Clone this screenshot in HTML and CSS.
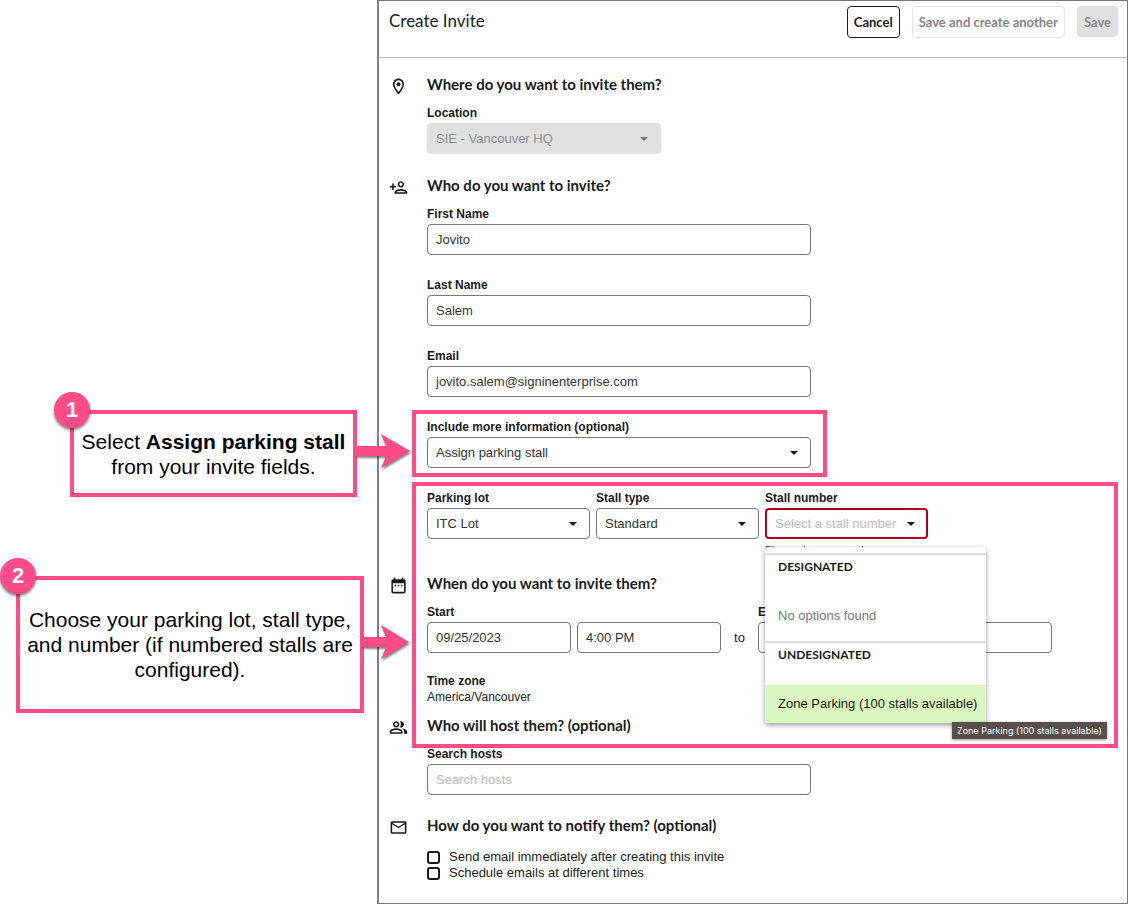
FILE: index.html
```html
<!DOCTYPE html>
<html lang="en">
<head>
    <meta charset="UTF-8">
    <meta name="viewport" content="width=device-width, initial-scale=1.0">
    <title>Create Invite</title>
    <link rel="stylesheet" href="styles.css">
</head>
<body>
    <div class="page">
        <aside class="notes">
            <div class="note note-first">
                <span class="badge">1</span>
                <p>Select <strong>Assign parking stall</strong><br>from your invite fields.</p>
                <svg class="arrow" width="56" height="36" viewBox="0 0 56 36"><path d="M0 13h31L26 1l29 17-29 17 5-12H0z"/></svg>
            </div>
            <div class="note note-second">
                <span class="badge">2</span>
                <p>Choose your parking lot, stall type,<br>and number (if numbered stalls are<br>configured).</p>
                <svg class="arrow" width="48" height="36" viewBox="0 0 48 36"><path d="M0 13h24L19 1l28 17-28 17 5-12H0z"/></svg>
            </div>
        </aside>

        <form class="panel">
            <header class="panel-header">
                <h1>Create Invite</h1>
                <div class="actions">
                    <button type="button" class="btn">Cancel</button>
                    <button type="button" class="btn btn-light" disabled>Save and create another</button>
                    <button type="submit" class="btn btn-save" disabled>Save</button>
                </div>
            </header>

            <main class="panel-body">
                <section class="section">
                    <svg class="icon" viewBox="0 0 24 24"><path d="M12 2C8.13 2 5 5.13 5 9c0 5.25 7 13 7 13s7-7.75 7-13c0-3.87-3.13-7-7-7zM7 9c0-2.76 2.24-5 5-5s5 2.24 5 5c0 2.88-2.88 7.19-5 9.88C9.92 16.21 7 11.85 7 9z"/><circle cx="12" cy="9" r="2.5"/></svg>
                    <div class="section-content">
                        <h2>Where do you want to invite them?</h2>
                        <div class="field field-location">
                            <label for="location">Location</label>
                            <div class="select">
                                <select id="location" disabled>
                                    <option>SIE - Vancouver HQ</option>
                                </select>
                            </div>
                        </div>
                    </div>
                </section>

                <section class="section">
                    <svg class="icon" viewBox="0 0 24 24"><path d="M15 12c2.21 0 4-1.79 4-4s-1.79-4-4-4-4 1.79-4 4 1.79 4 4 4zm0-6c1.1 0 2 .9 2 2s-.9 2-2 2-2-.9-2-2 .9-2 2-2zm0 8c-2.67 0-8 1.34-8 4v2h16v-2c0-2.66-5.33-4-8-4zm-6 4c.22-.72 3.31-2 6-2 2.7 0 5.8 1.29 6 2H9zm-3-3v-3h3v-2H6V7H4v3H1v2h3v3z"/></svg>
                    <div class="section-content">
                        <h2>Who do you want to invite?</h2>
                        <div class="fields">
                            <div class="field">
                                <label for="first-name">First Name</label>
                                <input type="text" id="first-name" value="Jovito">
                            </div>
                            <div class="field">
                                <label for="last-name">Last Name</label>
                                <input type="text" id="last-name" value="Salem">
                            </div>
                            <div class="field">
                                <label for="email">Email</label>
                                <input type="email" id="email" value="jovito.salem@signinenterprise.com">
                            </div>
                            <div class="field highlight-info">
                                <label for="more-info">Include more information (optional)</label>
                                <div class="select">
                                    <select id="more-info">
                                        <option>Assign parking stall</option>
                                    </select>
                                </div>
                            </div>
                            <div class="parking-row highlight-parking">
                                <div class="field">
                                    <label for="parking-lot">Parking lot</label>
                                    <div class="select">
                                        <select id="parking-lot">
                                            <option>ITC Lot</option>
                                        </select>
                                    </div>
                                </div>
                                <div class="field">
                                    <label for="stall-type">Stall type</label>
                                    <div class="select">
                                        <select id="stall-type">
                                            <option>Standard</option>
                                        </select>
                                    </div>
                                </div>
                                <div class="field stall-number">
                                    <label for="stall-number">Stall number</label>
                                    <div class="select">
                                        <select id="stall-number" class="invalid">
                                            <option>Select a stall number</option>
                                        </select>
                                    </div>
                                    <p class="error">Please choose an option</p>
                                    <div class="menu">
                                        <div class="menu-group">
                                            <h3>Designated</h3>
                                            <p class="menu-item empty">No options found</p>
                                        </div>
                                        <div class="menu-group">
                                            <h3>Undesignated</h3>
                                            <p class="menu-item active">Zone Parking (100 stalls available)</p>
                                        </div>
                                        <span class="tooltip">Zone Parking (100 stalls available)</span>
                                    </div>
                                </div>
                            </div>
                        </div>
                    </div>
                </section>

                <section class="section section-when">
                    <svg class="icon" viewBox="0 0 24 24"><path d="M7 11h2v2H7v-2zm14-5v14c0 1.1-.9 2-2 2H5c-1.11 0-2-.9-2-2l.01-14c0-1.1.88-2 1.99-2h1V2h2v2h8V2h2v2h1c1.1 0 2 .9 2 2zm-2 14V9H5v11h14zm-4-9h2v2h-2v-2zm-4 0h2v2h-2v-2z"/></svg>
                    <div class="section-content">
                        <h2>When do you want to invite them?</h2>
                        <div class="dates">
                            <div class="field">
                                <label for="start-date">Start</label>
                                <div class="date-pair">
                                    <input type="text" id="start-date" value="09/25/2023">
                                    <input type="text" aria-label="Start time" value="4:00 PM">
                                </div>
                            </div>
                            <span class="to">to</span>
                            <div class="field">
                                <label for="end-date">End</label>
                                <div class="date-pair">
                                    <input type="text" id="end-date">
                                    <input type="text" aria-label="End time">
                                </div>
                            </div>
                        </div>
                        <div class="timezone">
                            <h4>Time zone</h4>
                            <p>America/Vancouver</p>
                        </div>
                    </div>
                </section>

                <section class="section section-host">
                    <svg class="icon" viewBox="0 0 24 24"><path d="M16.67 13.13C18.04 14.06 19 15.32 19 17v3h4v-3c0-2.18-3.57-3.47-6.33-3.87zM15 12c2.21 0 4-1.79 4-4s-1.79-4-4-4c-.47 0-.91.1-1.33.24C14.5 5.27 15 6.58 15 8s-.5 2.73-1.33 3.76c.42.14.86.24 1.33.24zM9 12c2.21 0 4-1.79 4-4s-1.79-4-4-4-4 1.79-4 4 1.79 4 4 4zm0-6c1.1 0 2 .9 2 2s-.9 2-2 2-2-.9-2-2 .9-2 2-2zm0 7c-2.67 0-8 1.34-8 4v3h16v-3c0-2.66-5.33-4-8-4zm6 5H3v-.99C3.2 16.29 6.3 15 9 15s5.8 1.29 6 2v1z"/></svg>
                    <div class="section-content">
                        <h2>Who will host them? (optional)</h2>
                        <div class="field">
                            <label for="hosts">Search hosts</label>
                            <input type="text" id="hosts" placeholder="Search hosts">
                        </div>
                    </div>
                </section>

                <section class="section">
                    <svg class="icon" viewBox="0 0 24 24"><path d="M22 6c0-1.1-.9-2-2-2H4c-1.1 0-2 .9-2 2v12c0 1.1.9 2 2 2h16c1.1 0 2-.9 2-2V6zm-2 0l-8 5-8-5h16zm0 12H4V8l8 5 8-5v10z"/></svg>
                    <div class="section-content">
                        <h2>How do you want to notify them? (optional)</h2>
                        <div class="checks">
                            <label class="check"><input type="checkbox">Send email immediately after creating this invite</label>
                            <label class="check"><input type="checkbox">Schedule emails at different times</label>
                        </div>
                    </div>
                </section>
            </main>
        </form>
    </div>
</body>
</html>
```

FILE: styles.css
```css
*, *::before, *::after {
    box-sizing: border-box;
}
body {
    margin: 0;
    font-family: "Liberation Sans", Arial, sans-serif;
    font-size: 13px;
    color: #1a1a1a;
    background-color: #ffffff;
}
h1, h2, h3, h4, p {
    margin: 0;
}
.page {
    display: grid;
    grid-template-columns: 377px 1fr;
    min-height: 100vh;
}

/* callouts */
.notes {
    padding-top: 410px;
}
.note {
    position: relative;
    z-index: 3;
    display: flex;
    align-items: center;
    justify-content: center;
    border: 4px solid #ff4b87;
    font-size: 21px;
    line-height: 25px;
    color: #000000;
    text-align: center;
    white-space: nowrap;
}
.note-first {
    height: 87px;
    margin: 0 20px 79px 70px;
}
.note-second {
    height: 137px;
    margin: 0 13px 0 16px;
}
.badge {
    position: absolute;
    top: -22px;
    left: -20px;
    width: 36px;
    height: 36px;
    border-radius: 50%;
    background-color: #ff4b87;
    box-shadow: 0 2px 3px rgba(0, 0, 0, 0.5);
    color: #ffffff;
    font-weight: bold;
    font-size: 22px;
    line-height: 36px;
}
.arrow {
    position: absolute;
    left: 100%;
    top: 50%;
    margin-top: -21px;
    margin-left: 2px;
    fill: #ff4b87;
    overflow: visible;
    filter: drop-shadow(1px 2px 1px rgba(0, 0, 0, 0.5));
}

/* form panel */
.panel {
    border: 1px solid #777777;
    border-left: 2px solid #808080;
}
.panel-header {
    display: flex;
    justify-content: space-between;
    align-items: flex-start;
    height: 57px;
    padding: 5px 9px 0 10px;
    border-bottom: 1px solid #bbbbbb;
}
h1, h2, .btn {
    font-family: Lato, "Open Sans", sans-serif;
}
h1 {
    font-size: 17px;
    font-weight: normal;
    line-height: 30px;
}
.actions {
    display: flex;
    align-items: flex-start;
    gap: 12px;
}
.btn {
    height: 32px;
    padding: 0 6px;
    border: 1px solid #1a1a1a;
    border-radius: 4px;
    background-color: #ffffff;
    color: #1a1a1a;
    font-size: 13px;
    font-weight: bold;
}
.btn-light {
    border-color: #e4e4e4;
    color: #858585;
}
.btn-save {
    height: 31px;
    border-color: #e0e0e0;
    background-color: #e0e0e0;
    color: #8a8a8a;
}
.panel-body {
    padding: 16px 9px 0 10px;
}
.section {
    display: grid;
    grid-template-columns: 38px 1fr;
    margin-bottom: 21px;
}
.icon {
    width: 19px;
    height: 19px;
    margin-top: 3px;
    fill: #1a1a1a;
}
h2 {
    margin-bottom: 11px;
    font-size: 15px;
    font-weight: bold;
    line-height: 20px;
}
.fields {
    display: flex;
    flex-direction: column;
    gap: 22px;
}
.field {
    position: relative;
    display: flex;
    flex-direction: column;
    gap: 2px;
    width: 100%;
    max-width: 384px;
}
.field-location {
    max-width: 234px;
}
.field label, h4 {
    font-size: 12px;
    font-weight: bold;
    line-height: 16px;
}
input[type="text"], input[type="email"], select {
    width: 100%;
    height: 31px;
    padding: 0 8px;
    border: 1px solid #777777;
    border-radius: 4px;
    background-color: #ffffff;
    color: #333333;
    font-family: inherit;
    font-size: 13px;
}
input::placeholder {
    color: #bbbbbb;
}
select {
    appearance: none;
    cursor: pointer;
}
select:disabled {
    border-color: #e0e0e0;
    background-color: #e0e0e0;
    color: #8f8f8f;
    opacity: 1;
}
select.invalid {
    border: 2px solid #b00020;
    color: #bbbbbb;
}
.select {
    position: relative;
}
.select::after {
    content: "";
    position: absolute;
    top: 14px;
    right: 13px;
    border: 4px solid transparent;
    border-top-color: #1a1a1a;
    border-bottom: 0;
    pointer-events: none;
}
.field-location .select::after {
    border-top-color: #777777;
}
.parking-row {
    position: relative;
    display: flex;
    gap: 6px;
}
.parking-row .field {
    max-width: 163px;
}

/* pink frames round the fields the callouts point to */
.highlight-info::after, .highlight-parking::after {
    content: "";
    position: absolute;
    left: -15px;
    border: 4px solid #ff4b87;
    pointer-events: none;
}
.highlight-info::after {
    top: -9px;
    right: -16px;
    bottom: -9px;
}
.highlight-parking::after {
    top: -8px;
    right: 0;
    height: 266px;
}

/* stall number drop-down */
.error {
    position: absolute;
    top: 55px;
    left: 0;
    color: #b00020;
    font-size: 10px;
    line-height: 12px;
    white-space: nowrap;
}
.menu {
    position: absolute;
    z-index: 2;
    top: 57px;
    left: 0;
    width: 221px;
    padding-top: 6px;
    border-radius: 3px;
    background-color: #ffffff;
    box-shadow: 0 2px 5px rgba(0, 0, 0, 0.4);
}
.menu-group {
    border-top: 2px solid #dddddd;
    padding-bottom: 6px;
}
.menu-group:nth-child(2) {
    padding-bottom: 0;
}
h3 {
    margin-bottom: 18px;
    padding: 0 13px;
    font-family: Lato, "Open Sans", sans-serif;
    font-size: 12px;
    line-height: 24px;
    text-transform: uppercase;
}
.menu-item {
    padding: 0 13px;
    line-height: 38px;
    white-space: nowrap;
}
.empty {
    color: #777777;
}
.active {
    border-radius: 0 0 3px 3px;
    background-color: #d9f7be;
}
.tooltip {
    position: absolute;
    top: 175px;
    left: 187px;
    padding: 0 5px;
    background-color: #57504d;
    box-shadow: 0 1px 3px rgba(0, 0, 0, 0.4);
    color: #ffffff;
    font-family: Inter, sans-serif;
    font-size: 9px;
    line-height: 17px;
    white-space: nowrap;
}

.section-when {
    margin-top: 34px;
    margin-bottom: 10px;
}
.dates {
    display: flex;
    align-items: flex-end;
}
.dates .field {
    max-width: 294px;
}
.date-pair {
    display: flex;
    gap: 6px;
}
.to {
    flex: 0 0 37px;
    line-height: 31px;
    text-align: center;
}
.timezone {
    margin-top: 20px;
}
.timezone p {
    font-size: 12px;
    line-height: 16px;
}
.section-host {
    margin-bottom: 20px;
}
.checks {
    display: flex;
    flex-direction: column;
    margin-top: 14px;
}
.check {
    display: flex;
    align-items: center;
    gap: 9px;
    line-height: 16px;
}
.check input {
    appearance: none;
    width: 13px;
    height: 13px;
    margin: 0;
    border: 2px solid #1a1a1a;
    border-radius: 3px;
}
```
